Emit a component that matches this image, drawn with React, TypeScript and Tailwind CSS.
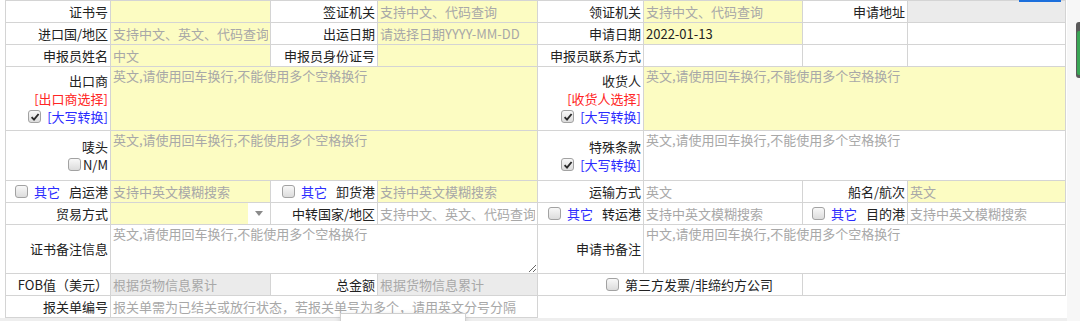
import React from "react";

type Tone = "yellow" | "white" | "gray";

const toneClass: Record<Tone, string> = {
  yellow: "bg-[#fcfcc2]",
  white: "bg-white",
  gray: "bg-[#ebebeb]",
};

const spanClass: Record<number, string> = {
  1: "col-span-1",
  2: "col-span-2",
  3: "col-span-3",
  4: "col-span-4",
};

const cellBorder = "border-r border-b border-[#d4d4d4]";

function Box({ checked }: { checked?: boolean }) {
  return (
    <span className="inline-flex h-[13px] w-[13px] shrink-0 items-center justify-center rounded-[3px] border border-[#a2a2a2] bg-linear-to-b from-[#f8f8f8] to-[#dcdcdc]">
      {checked && (
        <svg width="10" height="10" viewBox="0 0 10 10">
          <path d="M1.6 5.2 L4 7.6 L8.6 2" fill="none" stroke="#2a2a2a" strokeWidth="1.9" />
        </svg>
      )}
    </span>
  );
}

function Label({ children }: { children: React.ReactNode }) {
  return (
    <div className={`${cellBorder} flex items-center justify-end bg-white pr-[2px] whitespace-nowrap text-[#222]`}>
      {children}
    </div>
  );
}

function StackLabel({ children }: { children: React.ReactNode }) {
  return (
    <div className={`${cellBorder} flex flex-col items-end justify-center bg-white pr-[2px] leading-[18px] whitespace-nowrap text-[#222]`}>
      {children}
    </div>
  );
}

function Upper({ checked = true }: { checked?: boolean }) {
  return (
    <div className="flex items-center">
      <Box checked={checked} />
      <span className="ml-[6px] text-[#2b2bff]">[大写转换]</span>
    </div>
  );
}

function OtherLabel({ name }: { name: string }) {
  return (
    <Label>
      <Box />
      <span className="ml-[6px] text-[#2b2bff]">其它</span>
      <span className="ml-[9px]">{name}</span>
    </Label>
  );
}

function Field({
  placeholder = "",
  value,
  tone = "yellow",
  span = 1,
}: {
  placeholder?: string;
  value?: string;
  tone?: Tone;
  span?: number;
}) {
  return (
    <div className={`${cellBorder} ${spanClass[span]} ${toneClass[tone]}`}>
      <input
        className="block h-full w-full px-[2px] text-[#222] outline-none placeholder:text-[#a8a8a8]"
        placeholder={placeholder}
        defaultValue={value}
      />
    </div>
  );
}

function Area({
  placeholder = "英文,请使用回车换行,不能使用多个空格换行",
  tone = "yellow",
  resizable = false,
}: {
  placeholder?: string;
  tone?: Tone;
  resizable?: boolean;
}) {
  return (
    <div className={`${cellBorder} col-span-3 ${toneClass[tone]}`}>
      <textarea
        className={`block h-full w-full px-[2px] pt-0 leading-[17px] outline-none placeholder:text-[#a8a8a8] ${
          resizable ? "resize" : "resize-none"
        }`}
        placeholder={placeholder}
      />
    </div>
  );
}

function Empty({ span = 1 }: { span?: number }) {
  return <div className={`${cellBorder} ${spanClass[span]} bg-white`} />;
}

export default function App() {
  return (
    <div className="relative h-[321px] w-[1080px] overflow-hidden bg-[#f7f7f7] font-['Noto_Sans_CJK_SC','Noto_Sans','Liberation_Sans',sans-serif] text-[13px]">
      <div className="w-[1067px] bg-white pl-[5px]">
        <div className="grid w-[1061px] grid-cols-[105px_160px_107px_160px_106px_159px_105px_158px] grid-rows-[22px_22px_22px_64px_50px_22px_22px_49px_22px_22px] border-t border-l border-[#d4d4d4]">
          {/* row 1 */}
          <Label>证书号</Label>
          <Field />
          <Label>签证机关</Label>
          <Field placeholder="支持中文、代码查询" />
          <Label>领证机关</Label>
          <Field placeholder="支持中文、代码查询" />
          <Label>申请地址</Label>
          <Field tone="gray" />

          {/* row 2 */}
          <Label>进口国/地区</Label>
          <Field placeholder="支持中文、英文、代码查询" />
          <Label>出运日期</Label>
          <Field placeholder="请选择日期YYYY-MM-DD" />
          <Label>申请日期</Label>
          <Field value="2022-01-13" />
          <Empty />
          <Empty />

          {/* row 3 */}
          <Label>申报员姓名</Label>
          <Field placeholder="中文" />
          <Label>申报员身份证号</Label>
          <Field />
          <Label>申报员联系方式</Label>
          <Field tone="white" />
          <Empty />
          <Empty />

          {/* row 4 */}
          <StackLabel>
            <span>出口商</span>
            <span className="text-[#ff2424]">[出口商选择]</span>
            <Upper />
          </StackLabel>
          <Area />
          <StackLabel>
            <span>收货人</span>
            <span className="text-[#ff2424]">[收货人选择]</span>
            <Upper />
          </StackLabel>
          <Area />

          {/* row 5 */}
          <StackLabel>
            <span>唛头</span>
            <div className="flex items-center">
              <Box />
              <span className="ml-[2px]">N/M</span>
            </div>
          </StackLabel>
          <Area />
          <StackLabel>
            <span>特殊条款</span>
            <Upper />
          </StackLabel>
          <Area tone="white" />

          {/* row 6 */}
          <OtherLabel name="启运港" />
          <Field placeholder="支持中英文模糊搜索" />
          <OtherLabel name="卸货港" />
          <Field placeholder="支持中英文模糊搜索" />
          <Label>运输方式</Label>
          <Field tone="white" placeholder="英文" />
          <Label>船名/航次</Label>
          <Field placeholder="英文" />

          {/* row 7 */}
          <Label>贸易方式</Label>
          <div className={`${cellBorder} flex bg-white`}>
            <div className="w-[137px] bg-[#fcfcc2]" />
            <div className="flex flex-1 items-center justify-center">
              <svg width="8" height="5" viewBox="0 0 8 5">
                <path d="M0 0 H8 L4 5 Z" fill="#8a8a8a" />
              </svg>
            </div>
          </div>
          <Label>中转国家/地区</Label>
          <Field tone="white" placeholder="支持中文、英文、代码查询" />
          <OtherLabel name="转运港" />
          <Field tone="white" placeholder="支持中英文模糊搜索" />
          <OtherLabel name="目的港" />
          <Field tone="white" placeholder="支持中英文模糊搜索" />

          {/* row 8 */}
          <Label>证书备注信息</Label>
          <Area tone="white" resizable />
          <Label>申请书备注</Label>
          <Area tone="white" placeholder="中文,请使用回车换行,不能使用多个空格换行" />

          {/* row 9 */}
          <Label>FOB值（美元）</Label>
          <Field tone="gray" placeholder="根据货物信息累计" />
          <Label>总金额</Label>
          <Field tone="gray" placeholder="根据货物信息累计" />
          <div className={`${cellBorder} col-span-2 flex items-center justify-end bg-white pr-[29px] text-[#222]`}>
            <Box />
            <span className="ml-[6px]">第三方发票/非缔约方公司</span>
          </div>
          <Empty span={2} />

          {/* row 10 */}
          <Label>报关单编号</Label>
          <Field
            tone="white"
            span={3}
            placeholder="报关单需为已结关或放行状态，若报关单号为多个，请用英文分号分隔"
          />
          <div className="col-span-4 bg-white" />
        </div>
      </div>
      <div className="h-[4px] w-[1067px] bg-[#eeeeee]" />

      {/* overlays */}
      <div className="absolute top-0 left-[1019px] h-[2px] w-[42px] bg-[#1c6fdc]" />
      <div className="absolute top-[22px] left-[1076px] flex h-[56px] w-[8px] rounded-[3px] bg-[#5a5a5a] p-[1px]">
        <div className="mt-[8px] h-[44px] w-full rounded-[2px] bg-[#3aa655]" />
      </div>
      <div className="absolute top-[313px] left-[340px] h-[40px] w-[126px] border border-[#cfcfcf] bg-white px-[8px] pt-[4px] text-[#333] shadow-[0_2px_6px_rgba(0,0,0,0.15)]">
        报关单选择 加载更多
      </div>
    </div>
  );
}
